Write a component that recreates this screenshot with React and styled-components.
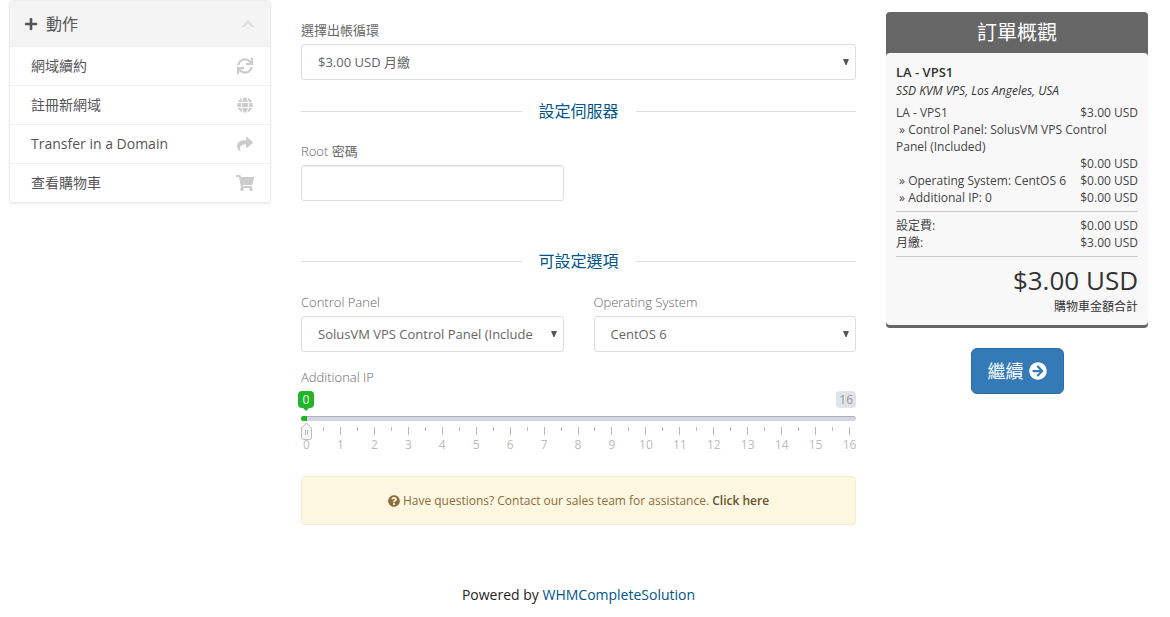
import { useState } from "react"
import styled, { createGlobalStyle } from "styled-components"
import { FaPlus, FaChevronUp, FaSync, FaGlobe, FaShare, FaShoppingCart, FaArrowCircleRight, FaQuestionCircle } from "react-icons/fa"

const GlobalStyle = createGlobalStyle`
*{
    box-sizing:border-box;
}
body{
    margin:0;
    background-color:#fff;
    color:#333;
    font-family:"Open Sans","Noto Sans CJK TC",sans-serif;
    font-size:14px;
    line-height:20px;
}
`

const Page = styled.div`
display:grid;
grid-template-columns:262px minmax(0, 1fr) 262px;
gap:30px;
align-items:start;
padding:0 22px 10px 9px;
@media (max-width:900px){
    grid-template-columns:minmax(0, 1fr);
}
`

const Panel = styled.nav`
border:1px solid #eee;
border-radius:4px;
box-shadow:0 1px 2px rgba(0, 0, 0, 0.08);
overflow:hidden;
`

const PanelTitle = styled.h3`
display:flex;
align-items:center;
gap:8px;
margin:0;
padding:0 15px 0 14px;
height:45px;
background-color:#f4f4f4;
color:#555;
font-size:16px;
font-weight:400;
`

const Collapse = styled.button`
display:flex;
margin-left:auto;
padding:0;
border:0;
background:none;
color:#ddd;
font-size:14px;
`

const MenuLink = styled.a`
display:flex;
align-items:center;
justify-content:space-between;
height:39px;
padding:0 15px 0 21px;
border-top:1px solid #f1f1f1;
color:#555;
text-decoration:none;
& svg{
    width:20px;
    height:16px;
    color:#ccc;
}
`

const Main = styled.main`
padding-top:21px;
`

const Heading = styled.h2`
display:flex;
align-items:center;
gap:17px;
margin:${props => props.$spaced ? "50px 0 22px" : "21px 0"};
color:#058;
font-size:16px;
line-height:20px;
font-weight:400;
&::before, &::after{
    content:"";
    flex:1;
    height:1px;
    background-color:#ddd;
}
`

const Fields = styled.div`
display:grid;
grid-template-columns:repeat(2, minmax(0, 1fr));
gap:30px;
`

const Label = styled.label`
display:block;
margin-bottom:5px;
color:#666;
font-size:13px;
line-height:18px;
font-weight:300;
& span{
    font-weight:400;
}
`

const TextInput = styled.input`
display:block;
width:100%;
height:36px;
padding:0 12px;
border:1px solid #ddd;
border-radius:3px;
box-shadow:inset 0 1px 1px rgba(0, 0, 0, 0.06);
color:#666;
font:inherit;
font-size:13px;
`

const SelectWrap = styled.div`
position:relative;
& svg{
    position:absolute;
    top:15px;
    right:7px;
    pointer-events:none;
}
`

const Select = styled.select`
display:block;
width:100%;
height:36px;
padding:0 30px 0 16px;
appearance:none;
border:1px solid #ddd;
border-radius:3px;
background-color:#fff;
color:#666;
font:inherit;
font-size:13px;
`

const SliderGroup = styled.div`
margin-top:16px;
`

const Bubbles = styled.div`
display:flex;
justify-content:space-between;
height:25px;
`

const Bubble = styled.output`
position:relative;
height:17px;
min-width:16px;
padding:0 3px;
border-radius:4px;
background-color:${props => props.$active ? "#20b426" : "#e1e4e9"};
color:${props => props.$active ? "#fff" : "#999"};
font-size:12px;
line-height:17px;
text-align:center;
`

const CurrentBubble = styled(Bubble)`
transform:translateX(-50%);
margin-left:5px;
&::after{
    content:"";
    position:absolute;
    top:17px;
    left:50%;
    margin-left:-3px;
    border:3px solid transparent;
    border-top-color:#20b426;
}
`

const Track = styled.div`
position:relative;
height:5px;
border-radius:3px;
border-top:1px solid #aeb2c0;
background-color:#d3d6e0;
`

const Filled = styled.div`
height:5px;
margin-top:-1px;
border-radius:3px 0 0 3px;
background-color:#20b426;
`

const Handle = styled.svg`
position:absolute;
top:5px;
z-index:1;
`

const Range = styled.input`
position:absolute;
top:-5px;
left:0;
width:100%;
height:28px;
margin:0;
opacity:0;
z-index:2;
`

const Scale = styled.div`
display:flex;
justify-content:space-between;
padding:6px 6px 0 5px;
height:55px;
`

const Tick = styled.span`
display:flex;
flex-direction:column;
align-items:center;
width:1px;
color:#bbb;
font-size:12px;
line-height:20px;
&::before{
    content:"";
    flex:none;
    width:1px;
    height:${props => props.$minor ? "4px" : "8px"};
    background-color:#bbb;
}
`

const Notice = styled.div`
display:flex;
align-items:center;
justify-content:center;
gap:3px;
padding:14px;
border:1px solid #faebcc;
border-radius:4px;
background-color:#fdf7e2;
color:#8a6d3b;
font-size:12px;
line-height:19px;
& a{
    color:#66512c;
    font-weight:600;
    text-decoration:none;
}
`

const Footer = styled.footer`
margin-top:60px;
text-align:center;
color:#222;
& a{
    color:#058;
    text-decoration:none;
}
`

const Side = styled.aside`
display:flex;
flex-direction:column;
align-items:center;
gap:20px;
padding-top:12px;
`

const Summary = styled.section`
align-self:stretch;
padding-bottom:3px;
border-radius:4px;
background-color:#666;
`

const SummaryTitle = styled.h2`
margin:0;
color:#fff;
font-size:20px;
line-height:41px;
font-weight:400;
text-align:center;
`

const SummaryBody = styled.div`
padding:10px;
border-radius:4px;
background-color:#f8f8f8;
font-size:12px;
line-height:17px;
`

const ProductName = styled.strong`
display:block;
font-size:13px;
line-height:19px;
font-weight:600;
`

const ProductGroup = styled.em`
display:block;
margin-bottom:5px;
`

const Line = styled.div`
display:flex;
flex-wrap:wrap;
justify-content:space-between;
color:#444;
& span:last-child{
    margin-left:auto;
}
`

const Totals = styled.div`
margin:5px 0;
padding:5px 0;
border:solid #ccc;
border-width:1px 0;
`

const Due = styled.div`
text-align:right;
& strong{
    display:block;
    font-size:26px;
    line-height:36px;
    font-weight:400;
}
`

const Continue = styled.button`
display:flex;
align-items:center;
gap:5px;
padding:10px 16px;
border:1px solid #2e6da4;
border-radius:6px;
background-color:#337ab7;
color:#fff;
font:inherit;
font-size:18px;
line-height:24px;
`

const menu = [
    { text: "網域續約", Icon: FaSync },
    { text: "註冊新網域", Icon: FaGlobe },
    { text: "Transfer in a Domain", Icon: FaShare },
    { text: "查看購物車", Icon: FaShoppingCart },
]

const MAX_IP = 16

const Dropdown = ({ id, label, option })=>(
    <div>
        <Label htmlFor={id}>{label}</Label>
        <SelectWrap>
            <Select id={id}>
                <option>{option}</option>
            </Select>
            <svg width="6" height="6" viewBox="0 0 6 6" aria-hidden="true">
                <path d="M0 0h6L3.5 6h-1z" fill="#555" />
            </svg>
        </SelectWrap>
    </div>
)

const IpSlider = ()=>{

    const [value, setValue] = useState(0)
    const ratio = value / MAX_IP
    const left = `calc((100% - 11px) * ${ratio})`

    return(
        <SliderGroup>
            <Label htmlFor="ip">Additional IP</Label>
            <Bubbles>
                <CurrentBubble $active style={{ left }}>{value}</CurrentBubble>
                <Bubble>{MAX_IP}</Bubble>
            </Bubbles>
            <Track>
                <Filled style={{ width: `calc((100% - 11px) * ${ratio} + 6px)` }} />
                <Handle width="11" height="18" viewBox="0 0 11 18" style={{ left }} aria-hidden="true">
                    <path d="M5.5 1L10.5 6V15.5Q10.5 17.5 8.5 17.5H2.5Q.5 17.5 .5 15.5V6Z" fill="#f6f6f6" stroke="#bbb" />
                    <path d="M4.5 8v5M6.5 8v5" stroke="#bbb" />
                </Handle>
                <Range id="ip" type="range" min="0" max={MAX_IP} value={value} onChange={e => setValue(Number(e.target.value))} />
            </Track>
            <Scale>
                {Array.from({ length: MAX_IP * 2 + 1 }, (_, i) => (
                    <Tick key={i} $minor={i % 2 === 1}>{i % 2 === 0 && i / 2}</Tick>
                ))}
            </Scale>
        </SliderGroup>
    )
}

const App = ()=>{

    return(
        <>
            <GlobalStyle />
            <Page>

                <Panel>
                    <PanelTitle>
                        <FaPlus size={14} />
                        動作
                        <Collapse type="button" aria-label="動作"><FaChevronUp /></Collapse>
                    </PanelTitle>
                    {menu.map(({ text, Icon }) => (
                        <MenuLink href="#" key={text}>{text}<Icon /></MenuLink>
                    ))}
                </Panel>

                <Main>
                    <Dropdown id="cycle" label={<span>選擇出帳循環</span>} option="$3.00 USD 月繳" />

                    <Heading>設定伺服器</Heading>
                    <Fields>
                        <div>
                            <Label htmlFor="root">Root <span>密碼</span></Label>
                            <TextInput id="root" type="password" />
                        </div>
                    </Fields>

                    <Heading $spaced>可設定選項</Heading>
                    <Fields>
                        <Dropdown id="panel" label="Control Panel" option="SolusVM VPS Control Panel (Included)" />
                        <Dropdown id="os" label="Operating System" option="CentOS 6" />
                    </Fields>
                    <IpSlider />

                    <Notice>
                        <FaQuestionCircle />
                        <span>Have questions? Contact our sales team for assistance. <a href="#">Click here</a></span>
                    </Notice>

                    <Footer>Powered by <a href="#">WHMCompleteSolution</a></Footer>
                </Main>

                <Side>
                    <Summary>
                        <SummaryTitle>訂單概觀</SummaryTitle>
                        <SummaryBody>
                            <ProductName>LA - VPS1</ProductName>
                            <ProductGroup>SSD KVM VPS, Los Angeles, USA</ProductGroup>
                            <Line><span>LA - VPS1</span><span>$3.00 USD</span></Line>
                            <Line><span>&nbsp;» Control Panel: SolusVM VPS Control Panel (Included)</span><span>$0.00 USD</span></Line>
                            <Line><span>&nbsp;» Operating System: CentOS 6</span><span>$0.00 USD</span></Line>
                            <Line><span>&nbsp;» Additional IP: 0</span><span>$0.00 USD</span></Line>
                            <Totals>
                                <Line><span>設定費:</span><span>$0.00 USD</span></Line>
                                <Line><span>月繳:</span><span>$3.00 USD</span></Line>
                            </Totals>
                            <Due>
                                <strong>$3.00 USD</strong>
                                購物車金額合計
                            </Due>
                        </SummaryBody>
                    </Summary>
                    <Continue type="submit">繼續<FaArrowCircleRight /></Continue>
                </Side>

            </Page>
        </>
    )
}

export default App
